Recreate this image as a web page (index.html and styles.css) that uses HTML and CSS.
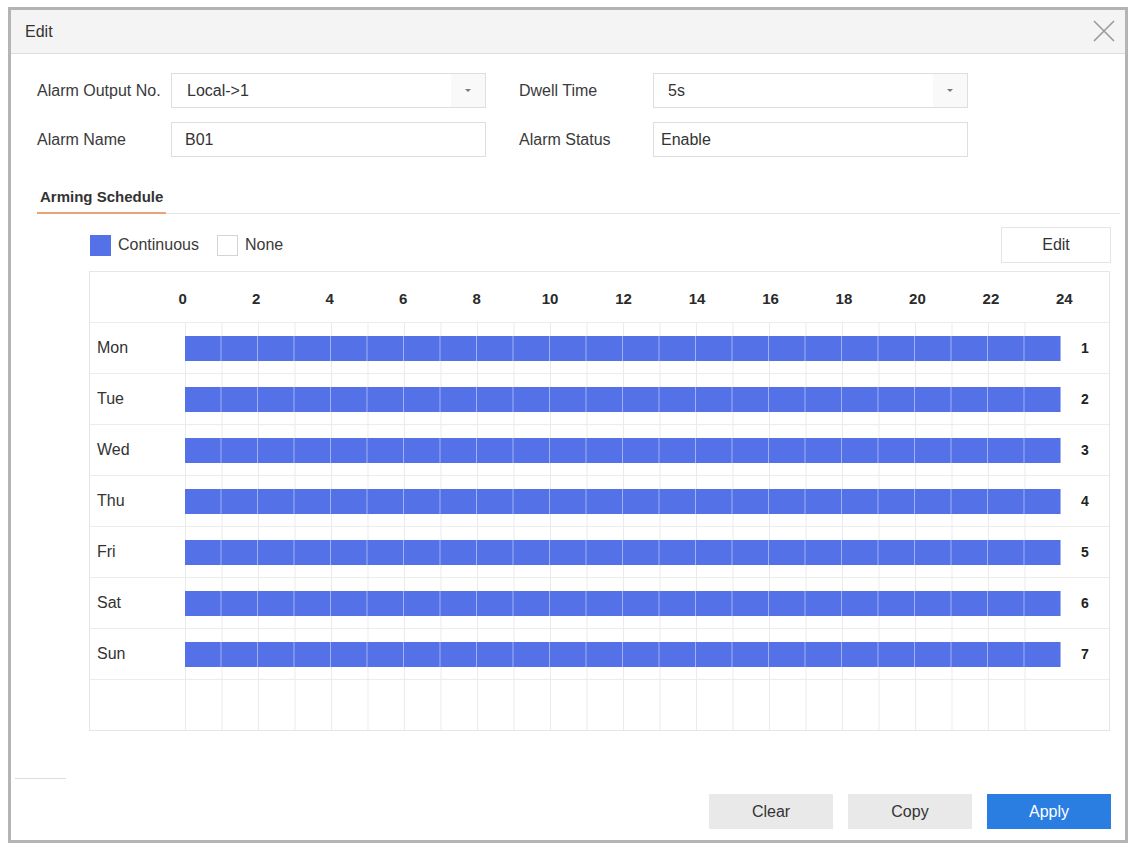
FILE: index.html
```html
<html>

<head>
  <meta charset="utf-8">
  <title>Edit</title>
  <link rel="stylesheet" href="styles.css">
</head>

<body>
  <div class="dialog">
    <div class="dialog-head">
      <span class="dialog-title">Edit</span>
      <!-- close icon -->
      <svg class="close" width="22" height="22" viewBox="0 0 22 22">
        <path d="M1 1 L21 21 M21 1 L1 21" stroke="#9a9a9a" stroke-width="1.6" fill="none" />
      </svg>
    </div>

    <div class="fields">
      <div class="field-row">
        <label class="field-label">Alarm Output No.</label>
        <div class="select">
          <span class="value pad16">Local-&gt;1</span>
          <span class="caret-box"><span class="caret"></span></span>
        </div>
        <label class="field-label second">Dwell Time</label>
        <div class="select">
          <span class="value pad15">5s</span>
          <span class="caret-box"><span class="caret"></span></span>
        </div>
      </div>
      <div class="field-row">
        <label class="field-label">Alarm Name</label>
        <div class="input"><span class="value pad14">B01</span></div>
        <label class="field-label second">Alarm Status</label>
        <div class="input"><span class="value pad8">Enable</span></div>
      </div>
    </div>

    <div class="tabs">
      <span class="tab active">Arming Schedule</span>
    </div>

    <div class="schedule">
      <div class="legend-row">
        <div class="legend">
          <span class="swatch on"></span><span class="legend-text">Continuous</span>
          <span class="swatch off"></span><span class="legend-text">None</span>
        </div>
        <button class="btn-edit">Edit</button>
      </div>

      <div class="grid">
        <div class="row head">
          <span class="day"></span>
          <div class="hours">
            <span>0</span><span>2</span><span>4</span><span>6</span><span>8</span><span>10</span><span>12</span>
            <span>14</span><span>16</span><span>18</span><span>20</span><span>22</span><span>24</span>
          </div>
          <span class="num"></span>
        </div>
        <div class="row"><span class="day">Mon</span><div class="track"><div class="bar"></div></div><span class="num">1</span></div>
        <div class="row"><span class="day">Tue</span><div class="track"><div class="bar"></div></div><span class="num">2</span></div>
        <div class="row"><span class="day">Wed</span><div class="track"><div class="bar"></div></div><span class="num">3</span></div>
        <div class="row"><span class="day">Thu</span><div class="track"><div class="bar"></div></div><span class="num">4</span></div>
        <div class="row"><span class="day">Fri</span><div class="track"><div class="bar"></div></div><span class="num">5</span></div>
        <div class="row"><span class="day">Sat</span><div class="track"><div class="bar"></div></div><span class="num">6</span></div>
        <div class="row"><span class="day">Sun</span><div class="track"><div class="bar"></div></div><span class="num">7</span></div>
        <div class="row last"><span class="day"></span><div class="track"></div><span class="num"></span></div>
      </div>
    </div>

    <div class="foot-rule"></div>
    <div class="footer">
      <button class="btn">Clear</button>
      <button class="btn">Copy</button>
      <button class="btn primary">Apply</button>
    </div>
  </div>
</body>

</html>
```

FILE: styles.css
```css
body {
  margin: 0;
  background: #ffffff;
  font-family: "Liberation Sans", Arial, sans-serif;
  font-size: 16px;
  color: #333333;
}

.dialog {
  margin: 7px 0 0 8px;
  width: 1120px;
  height: 836px;
  box-sizing: border-box;
  border: 3px solid #b4b4b4;
  display: flex;
  flex-direction: column;
  background: #ffffff;
}

/* title bar */
.dialog-head {
  height: 43px;
  background: #f4f4f4;
  border-bottom: 1px solid #dddddd;
  display: flex;
  align-items: center;
  justify-content: space-between;
  padding: 0 10px 0 14px;
  flex-shrink: 0;
}

.dialog-title {
  font-size: 16px;
  color: #333333;
}

.close {
  display: block;
  margin-top: -2px;
}

/* alarm fields */
.fields {
  padding: 19px 0 0 26px;
  display: flex;
  flex-direction: column;
  gap: 14px;
}

.field-row {
  display: flex;
  align-items: center;
  height: 35px;
}

.field-label {
  width: 134px;
  color: #3a3a3a;
}

.field-label.second {
  margin-left: 33px;
}

.select,
.input {
  width: 315px;
  height: 35px;
  box-sizing: border-box;
  border: 1px solid #dedede;
  display: flex;
  align-items: center;
  background: #ffffff;
}

.value {
  flex: 1;
  color: #333333;
}

.pad16 { padding-left: 15px; }
.pad15 { padding-left: 14px; }
.pad14 { padding-left: 13px; }
.pad8 { padding-left: 7px; }

.caret-box {
  width: 34px;
  height: 100%;
  background: #f9f9f9;
  display: flex;
  align-items: center;
  justify-content: center;
}

.caret {
  width: 0;
  height: 0;
  border-left: 3px solid transparent;
  border-right: 3px solid transparent;
  border-top: 3px solid #7a7a7a;
}

/* tabs */
.tabs {
  margin: 22px 5px 0 26px;
  border-bottom: 1px solid #e3e3e3;
  display: flex;
}

.tab {
  padding: 8px 3px 5px 3px;
  line-height: 20px;
  font-size: 15px;
  font-weight: bold;
  color: #333333;
  margin-bottom: -1px;
}

.tab.active {
  border-bottom: 2px solid #e8a477;
}

/* schedule */
.schedule {
  margin: 13px 0 0 78px;
  width: 1021px;
}

.legend-row {
  display: flex;
  align-items: center;
  justify-content: space-between;
  height: 36px;
}

.legend {
  display: flex;
  align-items: center;
  padding-left: 1px;
}

.swatch {
  width: 21px;
  height: 21px;
  box-sizing: border-box;
}

.swatch.on {
  background: #5571e8;
}

.swatch.off {
  border: 1px solid #d4d4d4;
  background: #ffffff;
  margin-left: 18px;
}

.legend-text {
  margin-left: 7px;
  font-size: 16px;
  color: #3a3a3a;
}

.btn-edit {
  width: 110px;
  height: 36px;
  margin-right: -1px;
  border: 1px solid #e4e4e4;
  background: #ffffff;
  font-family: inherit;
  font-size: 16px;
  color: #333333;
  padding: 0;
}

.grid {
  margin-top: 8px;
  border: 1px solid #e6e6e6;
}

.row {
  display: grid;
  grid-template-columns: 95px 876px 48px;
  height: 50px;
  border-bottom: 1px solid #ececec;
}

.row.last {
  border-bottom: none;
}

.day {
  display: flex;
  align-items: center;
  padding-left: 7px;
  font-size: 16px;
  color: #333333;
}

.num {
  display: flex;
  align-items: center;
  justify-content: center;
  font-size: 14px;
  font-weight: bold;
  color: #222222;
}

/* hour ticks, every second hour, centred over the grid lines */
.hours {
  display: flex;
  align-items: center;
  margin: 0 -40px 0 -39px;
  padding-top: 2px;
}

.hours span {
  flex: 1;
  text-align: center;
  font-size: 15px;
  font-weight: bold;
  color: #2a2a2a;
}

/* one faint line per hour */
.track {
  display: flex;
  align-items: center;
  background-image: linear-gradient(to right, #ebebeb 1px, transparent 1px);
  background-size: 36.5px 100%;
}

.bar {
  width: 100%;
  height: 25px;
  background-color: #5571e8;
  background-image: linear-gradient(to right, rgba(255, 255, 255, 0.45) 1px, transparent 1px);
  background-size: 36.5px 100%;
  background-position: -1px 0;
}

/* footer */
.foot-rule {
  margin: auto 0 0 4px;
  width: 51px;
  height: 1px;
  background: #dcdcdc;
}

.footer {
  display: flex;
  justify-content: flex-end;
  gap: 15px;
  padding: 15px 14px 11px 0;
}

.btn {
  width: 124px;
  height: 35px;
  border: none;
  background: #e9e9e9;
  font-family: inherit;
  font-size: 16px;
  color: #333333;
  padding: 0;
}

.btn.primary {
  background: #2a7de1;
  color: #ffffff;
}
```
